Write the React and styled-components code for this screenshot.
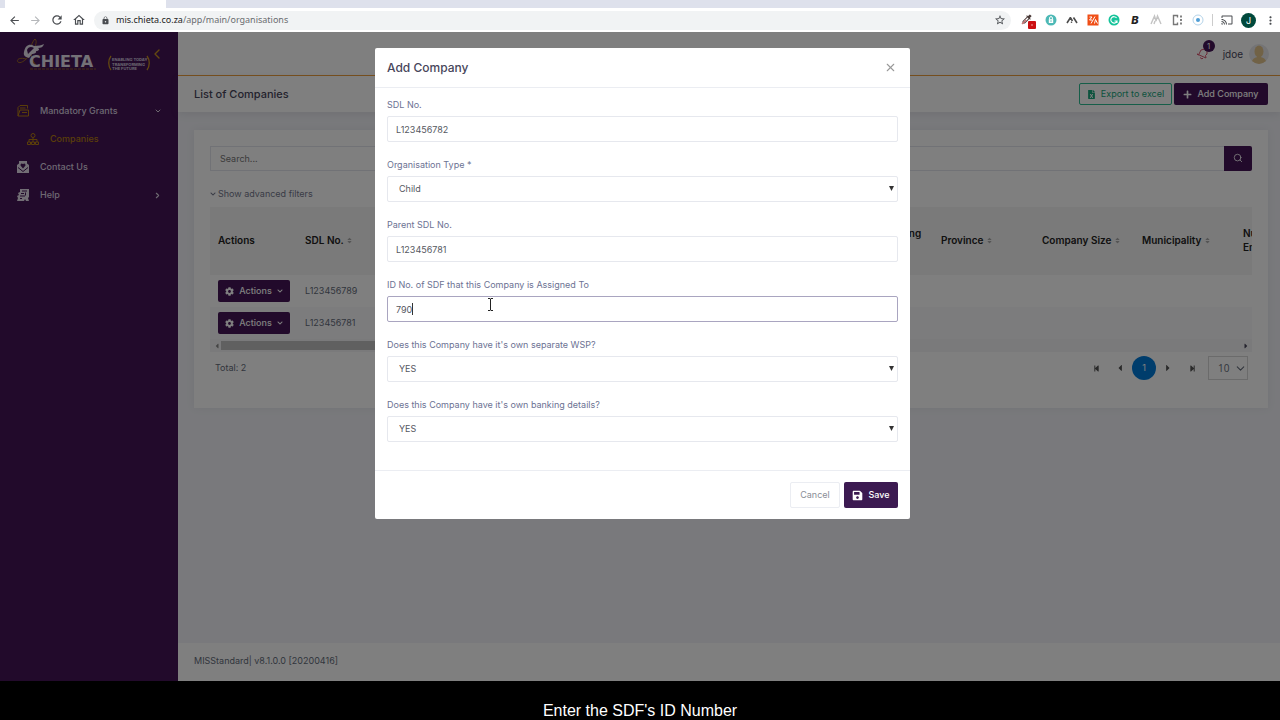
import React, { useState } from "react";
import styled, { createGlobalStyle } from "styled-components";
import {
  MdArrowBack,
  MdArrowForward,
  MdRefresh,
  MdOutlineHome,
  MdLock,
  MdStarBorder,
  MdCast,
  MdMoreVert,
  MdColorize,
} from "react-icons/md";
import {
  FaFileExcel,
  FaPlus,
  FaCog,
  FaChevronDown,
  FaSave,
  FaSort,
  FaCaretLeft,
  FaCaretRight,
  FaStepBackward,
  FaStepForward,
} from "react-icons/fa";
import { FiSearch, FiChevronLeft, FiChevronDown, FiChevronRight, FiX } from "react-icons/fi";

const COLUMNS = [
  { title: "Actions", width: 87 },
  { title: "SDL No.", width: 130, sort: true },
  { title: "Organisation Name", width: 130, sort: true },
  { title: "Registration Number", width: 130, sort: true },
  { title: "Organisation Trading Name", width: 246, indent: 125 },
  { title: "Province", width: 101, sort: true },
  { title: "Company Size", width: 100, sort: true },
  { title: "Municipality", width: 101, sort: true },
  { title: "Number of Employees", width: 90 },
];

const ROWS = ["L123456789", "L123456781"];

function Browser() {
  return (
    <>
      <TabStrip>
        <Tab />
      </TabStrip>
      <Toolbar>
        <MdArrowBack size={13} />
        <MdArrowForward size={13} color="#b5b7ba" />
        <MdRefresh size={14} />
        <MdOutlineHome size={14} />
        <AddressBar>
          <MdLock size={9} />
          <Url>
            mis.chieta.co.za<span>/app/main/organisations</span>
          </Url>
          <MdStarBorder size={12} />
        </AddressBar>
        <Extensions>
          <svg width="17" height="17" viewBox="0 0 17 17">
            <MdColorize size={12} x={2} y={1} color="#4a3a38" />
            <path d="M3 12l4-4" stroke="#c77" strokeWidth="1.5" />
            <rect x="9" y="9" width="8" height="8" rx="1" fill="#cc0f12" />
            <circle cx="13" cy="13" r="1" fill="#e87474" />
          </svg>
          <svg width="12" height="12" viewBox="0 0 12 12">
            <circle cx="6" cy="6" r="5.5" fill="#4db9b6" />
            <rect x="3.8" y="5.2" width="4.4" height="3.8" fill="#fff" />
            <path d="M4.6 5.5V4a1.4 1.4 0 012.8 0v1.5" stroke="#fff" fill="none" />
            <path d="M6 6.3v1.5" stroke="#4db9b6" />
          </svg>
          <svg width="12" height="12" viewBox="0 0 12 12">
            <path d="M1 9l3.5-5.5M4.3 3.5L6.5 7M7.5 3.5L11 9" stroke="#4c4c4c" strokeWidth="1.6" />
            <circle cx="5.5" cy="8.3" r="0.8" fill="#4c4c4c" />
          </svg>
          <svg width="12" height="12" viewBox="0 0 12 12">
            <rect x="0.5" y="0.5" width="11" height="11" fill="#f04e16" />
            <path d="M2.5 3L5 3 2.5 6H5M4 9.5l4-7M7.500 9.500l1-4 2 4" stroke="#fff" fill="none" />
          </svg>
          <svg width="12" height="12" viewBox="0 0 12 12">
            <circle cx="6" cy="6" r="5.5" fill="#15c39a" />
            <path d="M8.6 4A3.2 3.2 0 109 7H6.5M9 6.5V9" stroke="#fff" strokeWidth="1.1" fill="none" />
          </svg>
          <BoldMark>B</BoldMark>
          <svg width="12" height="12" viewBox="0 0 12 12">
            <path d="M1 10l3.500-8L6 7M11 10L7.500 2 6 7M4 10l1-3" stroke="#c4c4c4" strokeWidth="1.4" fill="none" />
          </svg>
          <svg width="12" height="12" viewBox="0 0 12 12">
            <path d="M6.500 3.500V1.500H2.500v9h4v-2" stroke="#777" strokeWidth="1.4" fill="none" />
            <path d="M10 1.500v2M10 5v2M10 8.500v2" stroke="#777" strokeWidth="1.8" />
          </svg>
          <svg width="12" height="12" viewBox="0 0 12 12">
            <circle cx="6" cy="6" r="5" stroke="#b5d4ea" fill="none" />
            <circle cx="6" cy="6" r="2" fill="#4e9ed6" />
          </svg>
        </Extensions>
        <Divider />
        <MdCast size={12} />
        <Profile>J</Profile>
        <MdMoreVert size={13} />
      </Toolbar>
    </>
  );
}

function Logo() {
  return (
    <svg width="138" height="38" viewBox="0 0 138 38">
      <g fill="none" stroke="#b07a18">
        <path d="M19 1c-3 3-5 9-4 15 1 7 4 10 6 12" strokeWidth="0.9" />
        <path d="M19 1c3 2 0 10-6 17-4 5-9 8-11 6s1-5 8-3" strokeWidth="0.8" />
      </g>
      <path d="M8 14c1-7 6-9 10-6 4 0 8-1 10-2-1 3-3 4-6 4 2 1 1 3-2 3 1 2-2 3-4 3l-3 4c-3-1-6-2-5-6z" fill="#e8e2ee" />
      <path d="M11 12c1-3 4-4 7-2l-6 6z" fill="#441456" />
      <LogoText x="13" y="29">CHIETA</LogoText>
      <path d="M14 31h66" stroke="#8b5a26" strokeDasharray="3 1" />
      <path d="M95 18c-3 4-3 10 0 14M131 18c3 4 3 10 0 14" stroke="#c8911f" strokeWidth="1.3" fill="none" />
      <Tagline x="96" y="23">ENABLING TODAY</Tagline>
      <Tagline x="96" y="28">TRANSFORMING</Tagline>
      <Tagline x="96" y="32">THE FUTURE</Tagline>
    </svg>
  );
}

function Sidebar() {
  return (
    <Aside>
      <Brand>
        <Logo />
        <CollapseButton aria-label="Collapse menu">
          <FiChevronLeft size={16} />
        </CollapseButton>
      </Brand>
      <MenuLink href="#grants">
        <svg width="12" height="12" viewBox="0 0 12 12" fill="none" stroke="#b57d12">
          <path d="M1 11V2.500L3 .5h7.500v3M1 11l2-6h8.500v6zM3 3h5.500M5 7.500h5" />
        </svg>
        <span>Mandatory Grants</span>
        <FiChevronDown size={8} strokeWidth={3} />
      </MenuLink>
      <MenuLink href="#companies" $sub>
        <svg width="12" height="12" viewBox="0 0 12 12" fill="none" stroke="#b57d12">
          <circle cx="6" cy="2.500" r="2" />
          <path d="M6 4.500V9M2 9V6.500h8V9M.5 9h3v2.500h-3zM4.500 9h3v2.500h-3zM8.500 9h3v2.500h-3z" />
        </svg>
        <span>Companies</span>
      </MenuLink>
      <MenuLink href="#contact">
        <svg width="12" height="12" viewBox="0 0 12 12">
          <path d="M0 4l2-1.500V0h8v2.500L12 4v8H0z" fill="#e4dcea" />
          <path d="M1 6.500l5 4 5-4" stroke="#441456" fill="none" />
          <path d="M6 7.500L3.500 4.500Q3.500 1.500 6 3 8.500 1.500 8.500 4.500z" fill="#441456" />
        </svg>
        <span>Contact Us</span>
      </MenuLink>
      <MenuLink href="#help">
        <svg width="12" height="12" viewBox="0 0 12 12">
          <path d="M3 0h9v8l-1 1 1 3H9L8 10l-1 2H0l1-3-1-2 2-1-1-2 2-1z" fill="#e4dcea" />
          <path d="M5 2h5M4 4.500h3M8.500 3.500v3M3 7h5M3 9.500h2" stroke="#441456" />
        </svg>
        <span>Help</span>
        <FiChevronRight size={9} strokeWidth={3} />
      </MenuLink>
    </Aside>
  );
}

function CompanyTable() {
  return (
    <TableClip>
      <Table>
        <colgroup>
          {COLUMNS.map((c) => (
            <Col key={c.title} $width={c.width} />
          ))}
        </colgroup>
        <thead>
          <tr>
            {COLUMNS.map((c) => (
              <Th key={c.title} $indent={c.indent}>
                {c.title} {c.sort && <FaSort size={7} color="#aaa" />}
              </Th>
            ))}
          </tr>
        </thead>
        <tbody>
          {ROWS.map((no) => (
            <tr key={no}>
              <Td>
                <ActionsButton>
                  <FaCog size={9} /> Actions <FaChevronDown size={6} />
                </ActionsButton>
              </Td>
              <Td>{no}</Td>
              <Td colSpan={7} />
            </tr>
          ))}
        </tbody>
      </Table>
      <ScrollTrack>
        <FaCaretLeft size={8} color="#888" />
        <ScrollThumb />
        <FaCaretRight size={8} />
      </ScrollTrack>
    </TableClip>
  );
}

function Main() {
  return (
    <MainColumn>
      <TopBar>
        <Bell aria-label="Notifications">
          <svg width="13" height="13" viewBox="0 0 13 13" fill="none" stroke="#d9536f">
            <path d="M1 7l1.500 1L5 3l4-1 2 2v3l-1.500 1.500L10 11 1 7zM4 10.500l2 1.500 1-1" />
          </svg>
          <Badge>1</Badge>
        </Bell>
        <span>jdoe</span>
        <svg width="20" height="20" viewBox="0 0 20 20">
          <circle cx="10" cy="10" r="10" fill="#e9e9ec" />
          <ellipse cx="10" cy="7.500" rx="4.500" ry="6" fill="#e3c48d" />
          <path d="M3 17q1-3 5-4h4q4 1 5 4-7 6-14 0zM8 10h4v4H8z" fill="#e3c48d" />
        </svg>
      </TopBar>
      <SubHeader>
        <h1>List of Companies</h1>
        <ExportButton>
          <FaFileExcel size={9} /> Export to excel
        </ExportButton>
        <PrimaryButton>
          <FaPlus size={9} /> Add Company
        </PrimaryButton>
      </SubHeader>
      <Content>
        <Card>
          <SearchRow>
            <input aria-label="Search" placeholder="Search..." />
            <button aria-label="Search companies">
              <FiSearch size={10} />
            </button>
          </SearchRow>
          <FilterLink href="#filters">
            <FaChevronDown size={6} /> Show advanced filters
          </FilterLink>
          <CompanyTable />
          <PagerRow>
            <span>Total: 2</span>
            <Pager>
              <PageButton aria-label="First"><FaStepBackward size={7} /></PageButton>
              <PageButton aria-label="Previous"><FaCaretLeft size={10} /></PageButton>
              <PageButton $current>1</PageButton>
              <PageButton aria-label="Next"><FaCaretRight size={10} /></PageButton>
              <PageButton aria-label="Last"><FaStepForward size={7} /></PageButton>
              <SizeBox>
                <select aria-label="Rows per page" defaultValue="10">
                  <option>10</option>
                  <option>25</option>
                </select>
                <FiChevronDown size={13} />
              </SizeBox>
            </Pager>
          </PagerRow>
        </Card>
      </Content>
      <PageFooter>MISStandard| v8.1.0.0 [20200416]</PageFooter>
    </MainColumn>
  );
}

function TextField({ id, label, initial, active }) {
  const [value, setValue] = useState(initial);
  return (
    <Field>
      <label htmlFor={id}>{label}</label>
      <Control>
        <TextInput id={id} value={value} $active={active} onChange={(e) => setValue(e.target.value)} />
        {active && <Caret />}
        {active && (
          <Pointer width="7" height="13" viewBox="0 0 7 13" fill="none" stroke="#222">
            <path d="M1 .5h2l.5.5.5-.5h2M3.500 1v11M1 12.500h2l.5-.5.5.5h2" />
          </Pointer>
        )}
      </Control>
    </Field>
  );
}

function SelectField({ id, label, options }) {
  return (
    <Field>
      <label htmlFor={id}>{label}</label>
      <Control>
        <Select id={id}>
          {options.map((o) => (
            <option key={o}>{o}</option>
          ))}
        </Select>
        <Arrow width="5" height="5" viewBox="0 0 5 5">
          <path d="M0 0h5L2.500 5z" fill="#333" />
        </Arrow>
      </Control>
    </Field>
  );
}

function AddCompany() {
  return (
    <Backdrop>
      <Modal role="dialog" aria-label="Add Company">
        <ModalHeader>
          <h2>Add Company</h2>
          <button aria-label="Close">
            <FiX size={13} />
          </button>
        </ModalHeader>
        <ModalBody>
          <TextField id="sdl" label="SDL No." initial="L123456782" />
          <SelectField id="type" label="Organisation Type *" options={["Child", "Parent"]} />
          <TextField id="parent" label="Parent SDL No." initial="L123456781" />
          <TextField id="sdf" label="ID No. of SDF that this Company is Assigned To" initial="790" active />
          <SelectField id="wsp" label="Does this Company have it's own separate WSP?" options={["YES", "NO"]} />
          <SelectField id="bank" label="Does this Company have it's own banking details?" options={["YES", "NO"]} />
        </ModalBody>
        <ModalFooter>
          <CancelButton>Cancel</CancelButton>
          <SaveButton>
            <FaSave size={11} /> Save
          </SaveButton>
        </ModalFooter>
      </Modal>
    </Backdrop>
  );
}

export default function App() {
  return (
    <Screen>
      <GlobalStyle />
      <Browser />
      <Page>
        <Sidebar />
        <Main />
        <AddCompany />
      </Page>
      <Caption>Enter the SDF's ID Number</Caption>
    </Screen>
  );
}

const GlobalStyle = createGlobalStyle`
  * {
    box-sizing: border-box;
  }
  body {
    margin: 0;
    font: 9px/16px Inter, "Open Sans", sans-serif;
    color: #48465b;
  }
  button, input, select {
    font: inherit;
    color: inherit;
    margin: 0;
    padding: 0;
    border: none;
    background: none;
  }
  h1, h2 {
    margin: 0;
    font-size: 11px;
    font-weight: 500;
  }
  a {
    color: inherit;
    text-decoration: none;
  }
  svg {
    flex: none;
  }
`;

const Screen = styled.div`
  min-height: 100vh;
  display: flex;
  flex-direction: column;
`;

const TabStrip = styled.div`
  height: 8px;
  background: #dee1ec;
  padding-left: 5px;
`;

const Tab = styled.div`
  width: 161px;
  height: 8px;
  background: #fff;
`;

const Toolbar = styled.div`
  height: 24px;
  display: flex;
  align-items: center;
  gap: 8px;
  padding: 0 3px 0 8px;
  background: #fff;
  color: #4a4d51;
`;

const AddressBar = styled.div`
  flex: 1;
  height: 19px;
  display: flex;
  align-items: center;
  gap: 6px;
  padding: 0 5px 0 7px;
  border-radius: 10px;
  background: #f1f3f4;
`;

const Url = styled.div`
  flex: 1;
  font-family: "Noto Sans", sans-serif;
  color: #222;
  span {
    color: #6a6d70;
  }
`;

const Extensions = styled.div`
  display: flex;
  align-items: center;
  gap: 9px;
`;

const BoldMark = styled.span`
  width: 12px;
  text-align: center;
  font-weight: 800;
  font-style: italic;
  font-size: 11px;
  color: #222;
`;

const Divider = styled.div`
  width: 1px;
  height: 12px;
  background: #ccc;
`;

const Profile = styled.div`
  width: 15px;
  height: 15px;
  border-radius: 50%;
  background: #00493c;
  color: #fff;
  line-height: 15px;
  text-align: center;
`;

const Page = styled.div`
  flex: 1;
  display: flex;
  position: relative;
`;

const Aside = styled.nav`
  width: 178px;
  flex: none;
  background: #441456;
  color: #dcd3e2;
`;

const Brand = styled.div`
  display: flex;
  height: 65px;
  padding: 6px 0 0 16px;
`;

const CollapseButton = styled.button`
  display: flex;
  width: 6px;
  height: 32px;
  align-items: center;
  justify-content: center;
  color: #c8911f;
`;

const LogoText = styled.text`
  font-family: "DejaVu Sans", sans-serif;
  font-size: 16px;
  font-weight: 700;
  fill: #e8e2ee;
`;

const Tagline = styled.text`
  font-size: 4px;
  font-weight: 700;
  fill: #d8cfe0;
`;

const MenuLink = styled.a`
  display: flex;
  align-items: center;
  gap: 11px;
  height: 28px;
  padding: 0 16px 0 ${(p) => (p.$sub ? 27 : 17)}px;
  font-weight: 500;
  color: ${(p) => (p.$sub ? "#b57d12" : "inherit")};
  span {
    flex: 1;
  }
`;

const MainColumn = styled.main`
  flex: 1;
  min-width: 0;
  display: flex;
  flex-direction: column;
  background: #f2f3f8;
`;

const TopBar = styled.header`
  height: 44px;
  display: flex;
  align-items: center;
  justify-content: flex-end;
  gap: 6px;
  padding-right: 11px;
  background: #fff;
  border-bottom: 1px solid #f0a03c;
  font-size: 10px;
`;

const Bell = styled.button`
  position: relative;
  display: flex;
  margin-right: 8px;
`;

const Badge = styled.span`
  position: absolute;
  left: 7px;
  top: -7px;
  width: 12px;
  height: 12px;
  border-radius: 50%;
  background: #441456;
  color: #fff;
  font-size: 8px;
  line-height: 12px;
`;

const SubHeader = styled.div`
  display: flex;
  align-items: center;
  gap: 2px;
  height: 36px;
  padding: 0 12px 0 16px;
  background: #fff;
  box-shadow: 0 2px 8px rgba(80, 80, 100, 0.12);
  h1 {
    flex: 1;
  }
`;

const PrimaryButton = styled.button`
  display: flex;
  align-items: center;
  justify-content: center;
  gap: 5px;
  width: 94px;
  height: 22px;
  border-radius: 2px;
  background: #441456;
  color: #fff;
  font-weight: 500;
`;

const ExportButton = styled(PrimaryButton)`
  width: 93px;
  background: #fff;
  border: 1px solid #2cbd92;
  color: #1aa67c;
  font-weight: 400;
`;

const ActionsButton = styled(PrimaryButton)`
  width: 72px;
`;

const Content = styled.div`
  flex: 1;
  padding: 18px 12px 16px 16px;
`;

const Card = styled.section`
  padding: 16px 16px 28px;
  background: #fff;
  box-shadow: 0 0 8px rgba(80, 80, 100, 0.08);
`;

const SearchRow = styled.div`
  display: flex;
  height: 25px;
  input {
    flex: 1;
    padding: 0 9px;
    border: 1px solid #e2e5ec;
    border-right: none;
  }
  input::placeholder {
    color: #777;
  }
  button {
    width: 28px;
    background: #441456;
    color: #fff;
    border-radius: 0 2px 2px 0;
    line-height: 1;
  }
`;

const FilterLink = styled.a`
  display: flex;
  align-items: center;
  gap: 2px;
  padding: 15px 0 5px;
  color: #74788d;
`;

const TableClip = styled.div`
  overflow: hidden;
`;

const Table = styled.table`
  table-layout: fixed;
  width: 1115px;
  border-collapse: collapse;
`;

const Col = styled.col`
  width: ${(p) => p.$width}px;
`;

const Th = styled.th`
  height: 68px;
  padding: 0 0 2px ${(p) => 8 + (p.$indent || 0)}px;
  text-align: left;
  font-size: 10px;
  font-weight: 600;
  line-height: 14px;
  color: #222;
  background: #f4f4f4;
`;

const Td = styled.td`
  height: 32px;
  padding: 0 0 0 8px;
  color: #646c7a;
  tr:nth-child(2) & {
    background: #f8f8fa;
  }
`;

const ScrollTrack = styled.div`
  display: flex;
  align-items: center;
  justify-content: space-between;
  height: 13px;
  padding: 0 2px 0 3px;
  background: #f4f4f6;
`;

const ScrollThumb = styled.div`
  flex: 1;
  height: 9px;
  margin-right: 360px;
  background: #c1c1c1;
`;

const PagerRow = styled.div`
  display: flex;
  align-items: center;
  justify-content: space-between;
  padding: 4px 4px 0 5px;
  color: #646c7a;
`;

const Pager = styled.div`
  display: flex;
  align-items: center;
`;

const PageButton = styled.button`
  display: flex;
  align-items: center;
  justify-content: center;
  width: 24px;
  height: 24px;
  border-radius: 50%;
  background: ${(p) => (p.$current ? "#007ad9" : "none")};
  color: ${(p) => (p.$current ? "#fff" : "#555")};
`;

const SizeBox = styled.div`
  display: flex;
  align-items: center;
  width: 40px;
  height: 24px;
  margin-left: 4px;
  padding-left: 9px;
  border: 1px solid #d6d6d6;
  select {
    width: 16px;
    appearance: none;
    font-family: "Open Sans", sans-serif;
    font-size: 10px;
  }
`;

const PageFooter = styled.footer`
  height: 38px;
  padding: 10px 16px;
  background: #fff;
  color: #646c7a;
`;

const Backdrop = styled.div`
  position: absolute;
  inset: 0;
  padding: 16px 11px 16px 16px;
  background: rgba(0, 0, 0, 0.5);
`;

const Modal = styled.div`
  max-width: 535px;
  margin: 0 auto;
  border-radius: 2px;
  background: #fff;
`;

const ModalHeader = styled.div`
  display: flex;
  align-items: center;
  justify-content: space-between;
  height: 40px;
  padding: 0 13px 0 12px;
  border-bottom: 1px solid #ebedf2;
  h2 {
    font-size: 12px;
  }
  button {
    display: flex;
    color: #999;
  }
`;

const ModalBody = styled.div`
  display: grid;
  gap: 15px;
  padding: 9px 12px 28px;
`;

const Field = styled.div`
  display: grid;
  gap: 3px;
  label {
    color: #6c7293;
  }
`;

const Control = styled.div`
  position: relative;
  height: 26px;
`;

const TextInput = styled.input`
  width: 100%;
  height: 100%;
  padding: 0 8px;
  border: 1px solid ${(p) => (p.$active ? "#a9a5c0" : "#e6e8ee")};
  border-radius: 2px;
  color: #55585f;
  outline: none;
`;

const Select = styled.select`
  width: 100%;
  height: 100%;
  padding: 0 11px;
  border: 1px solid #e6e8ee;
  border-radius: 2px;
  background: #fff;
  color: #55585f;
  appearance: none;
`;

const Arrow = styled.svg`
  position: absolute;
  right: 4px;
  top: 10px;
`;

const Caret = styled.span`
  position: absolute;
  left: 25px;
  top: 7px;
  width: 1px;
  height: 12px;
  background: #333;
`;

const Pointer = styled.svg`
  position: absolute;
  left: 100px;
  top: 2px;
`;

const ModalFooter = styled.div`
  display: flex;
  justify-content: flex-end;
  gap: 4px;
  padding: 11px 12px;
  border-top: 1px solid #ebedf2;
`;

const CancelButton = styled.button`
  width: 50px;
  height: 26px;
  border: 1px solid #ebedf2;
  border-radius: 2px;
  color: #8a8d96;
`;

const SaveButton = styled(PrimaryButton)`
  width: 54px;
  height: 26px;
  background: #3c1a51;
`;

const Caption = styled.div`
  height: 39px;
  padding-top: 20px;
  background: #000;
  color: #fff;
  font: 16px/19px "Liberation Sans", sans-serif;
  text-align: center;
`;
